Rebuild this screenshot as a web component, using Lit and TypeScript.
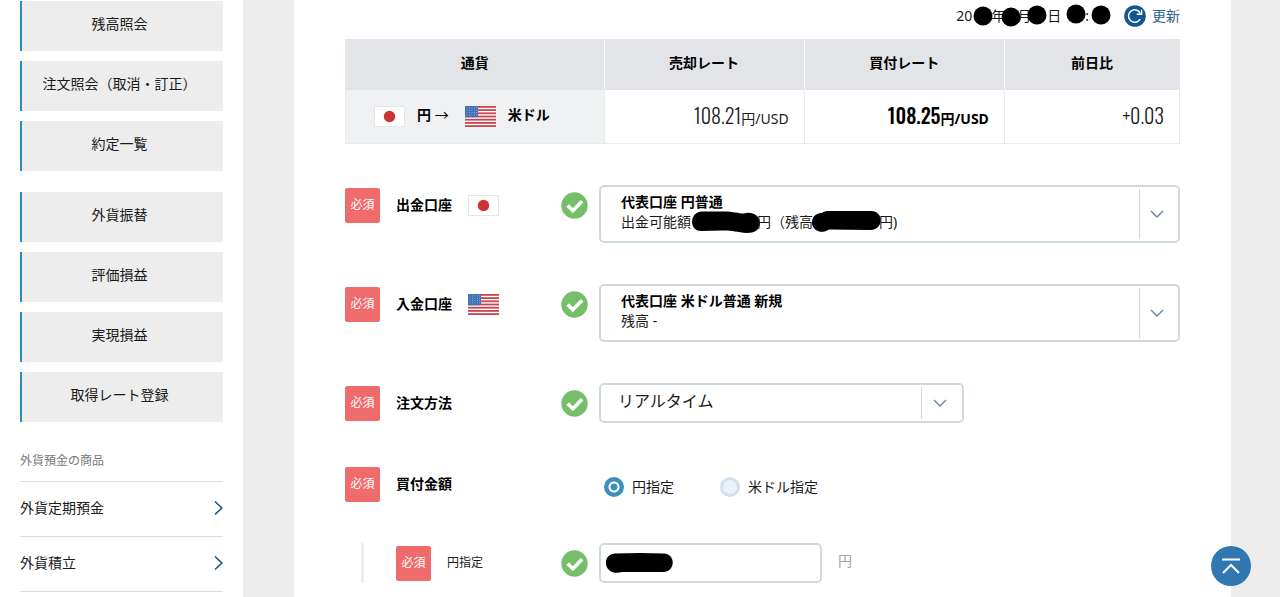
import { LitElement, html, svg, css, nothing } from "lit";
import { customElement, state } from "lit/decorators.js";

type Currency = "jpy" | "usd";

const TRADE_LINKS = [
  ["残高照会", "注文照会（取消・訂正）", "約定一覧"],
  ["外貨振替", "評価損益", "実現損益", "取得レート登録"],
];
const PRODUCT_LINKS = ["外貨定期預金", "外貨積立"];

const flag = (currency: Currency) =>
  currency === "jpy"
    ? html`<svg class="flag" viewBox="0 0 31 21" role="img" aria-label="日本">
        <rect x="0.5" y="0.5" width="30" height="20" fill="#fff" stroke="#e4e6e9" />
        <circle cx="15.5" cy="10.5" r="5.7" fill="#cc3333" />
      </svg>`
    : html`<svg class="flag" viewBox="0 0 31 21" role="img" aria-label="アメリカ">
        <rect width="31" height="21" fill="#fff" />
        ${[0, 1, 2, 3, 4, 5, 6].map(
          (i) => svg`<rect y=${i * 3.2} width="31" height="1.8" fill="#c9454b" />`
        )}
        <rect width="13" height="11.2" fill="#3f6fb8" />
        ${[1.5, 3.8, 6.1, 8.4].map((y) =>
          [1.5, 4, 6.5, 9, 11.2].map(
            (x) => svg`<rect x=${x} y=${y} width="0.9" height="0.9" fill="#a9c0e2" />`
          )
        )}
      </svg>`;

/** Black dot hiding part of the timestamp. */
const dot = (width: number, cx: number, cy: number) =>
  html`<svg class="mask" width=${width} height="20" aria-hidden="true">
    <circle cx=${cx} cy=${cy} r="9.5" />
  </svg>`;

const maskAvailable = html`<svg class="mask" width="66" height="20" aria-hidden="true">
  <path d="M11 -0.5 H32 C43 -0.5 47 1.5 53 1.5 C60 -1 69 3 69 11 C69 18 63 21 56 21 C45 20 40 18 31 18.5 L10 19 C-2 19 -2 0 11 -0.5Z" />
</svg>`;
const maskBalance = html`<svg class="mask" width="66" height="20" aria-hidden="true">
  <path d="M14 -1 H58 C71 -1 71 17.5 58 18 L16 17.5 C8 23 -1 18 -1 10.500 C-1 3 5 1 9 1 C10 0 12 -1 14 -1Z" />
</svg>`;

const check = html`<svg class="check" viewBox="0 0 27 27" role="img" aria-label="入力済み">
  <circle cx="13.5" cy="13.5" r="13.2" fill="#76bf69" />
  <path d="M6.700 13.600 L11.800 18.800 L21.200 9.300" fill="none" stroke="#fff" stroke-width="3.600" />
</svg>`;

const arrowDown = html`<span class="arrow" aria-hidden="true">
  <svg width="14" height="8" viewBox="0 0 14 8">
    <path d="M1 1 L7 7 L13 1" fill="none" stroke="#6685a3" stroke-width="1.400" />
  </svg>
</span>`;

@customElement("app-root")
export class AppRoot extends LitElement {
  static styles = css`
    :host {
      display: block;
      min-height: 100vh;
      background: #ededed;
      color: #1a1a1a;
      font: 14px/20px "Noto Sans", "Noto Sans CJK JP", sans-serif;
    }
    * {
      box-sizing: border-box;
    }
    a {
      color: inherit;
      text-decoration: none;
    }
    ul {
      list-style: none;
      margin: 0;
      padding: 0;
    }
    .page {
      display: grid;
      grid-template-columns: 243px minmax(0, 1fr);
      column-gap: 51px;
      height: 100vh;
      overflow: hidden;
      padding-right: 49px;
    }
    .side {
      background: #fff;
      padding: 1px 20px 0;
    }
    .group {
      display: grid;
      gap: 10px;
      margin-bottom: 21px;
    }
    .tile {
      display: flex;
      align-items: center;
      justify-content: center;
      height: 50px;
      padding: 0 6px 4px 0;
      background: #ededed;
      border-left: 2px solid #2f8cb8;
    }
    .side-title {
      margin: 0;
      padding: 8px 0 10px;
      border-bottom: 1px solid #dcdcdc;
      font-size: 12px;
      font-weight: 400;
      color: #777;
    }
    .product {
      display: flex;
      align-items: center;
      justify-content: space-between;
      height: 55px;
      padding-bottom: 3px;
      border-bottom: 1px solid #dcdcdc;
    }
    .main {
      background: #fff;
      padding: 0 51px;
    }
    .status {
      display: flex;
      align-items: center;
      justify-content: flex-end;
      gap: 14px;
      height: 32px;
      margin-bottom: 7px;
    }
    .time {
      white-space: nowrap;
    }
    .mask {
      overflow: visible;
      vertical-align: top;
      fill: #000;
    }
    .refresh {
      display: flex;
      align-items: center;
      gap: 6px;
      padding: 0;
      border: 0;
      background: none;
      font: inherit;
      color: #2d6590;
      cursor: pointer;
    }
    .rates {
      width: 100%;
      table-layout: fixed;
      border-collapse: collapse;
    }
    .rates th,
    .rates td {
      padding: 0 15px;
      border: 1px solid #e9eaec;
    }
    .rates th {
      color: #000;
      font-weight: 700;
    }
    .rates thead th {
      height: 50px;
      padding-bottom: 4px;
      background: #e3e4e8;
      border-color: #e3e4e8;
      border-right-color: #f8f8f9;
    }
    .rates thead th:last-child {
      border-right-color: #e3e4e8;
    }
    .rates tbody th {
      height: 54px;
      padding: 0 28px;
      background: #f0f1f3;
    }
    .rates td {
      text-align: right;
      white-space: nowrap;
    }
    .col-pair {
      width: 31%;
    }
    .col-rate {
      width: 24%;
    }
    .pair {
      display: flex;
      align-items: center;
    }
    .pair-text {
      padding: 0 16px 4px 12px;
    }
    .pair-arrow {
      font-family: "Noto Sans CJK JP", sans-serif;
      font-weight: 400;
    }
    .strong {
      color: #000;
      font-weight: 700;
    }
    .figure {
      font-family: "Oswald", "Roboto Condensed", "Liberation Sans Narrow", "Liberation Sans", sans-serif;
      font-size: 20px;
      font-weight: 300;
    }
    .strong .figure {
      font-weight: 500;
    }
    .flag {
      display: block;
      width: 31px;
      height: 21px;
      flex: none;
    }
    .form {
      display: grid;
      gap: 41px;
      margin-top: 41px;
    }
    .amount {
      display: grid;
      gap: 39px;
      margin: 0;
      padding: 0;
      border: 0;
      min-width: 0;
    }
    .row {
      display: grid;
      grid-template-columns: 243px minmax(0, 1fr);
      column-gap: 11px;
    }
    .caption {
      display: flex;
      align-items: center;
      gap: 16px;
      height: 40px;
    }
    .caption-sub {
      margin-left: 16px;
      padding-left: 32px;
      border-left: 3px solid #ececec;
      font-size: 12px;
    }
    .badge {
      flex: none;
      width: 35px;
      height: 35px;
      border-radius: 2px;
      background: #f06c6c;
      color: #fff;
      font-size: 12px;
      line-height: 33px;
      text-align: center;
    }
    .check {
      width: 27px;
      height: 27px;
      margin-left: auto;
      flex: none;
    }
    .field {
      display: grid;
      color: #1a1a1a;
    }
    .field > * {
      grid-area: 1 / 1;
    }
    .field-narrow {
      width: 365px;
      max-width: 100%;
    }
    .select,
    .text {
      margin: 0;
      border: 2px solid #cfdae0;
      border-radius: 5px;
      background: #fff;
      color: #1a1a1a;
      font: inherit;
    }
    .select {
      appearance: none;
      width: 100%;
      height: 40px;
      padding: 0 44px 4px 17px;
      font-size: 16px;
    }
    .select-account {
      height: 58px;
      padding: 0 42px 24px 20px;
      color: #000;
      font-size: 14px;
      font-weight: 700;
    }
    .note {
      align-self: end;
      padding: 0 42px 11px 22px;
      pointer-events: none;
      white-space: nowrap;
    }
    .arrow {
      display: grid;
      place-items: center;
      justify-self: end;
      width: 39px;
      margin: 4px 2px;
      padding-right: 4px;
      border-left: 1px solid #cfdae0;
      pointer-events: none;
    }
    .field-narrow .arrow {
      width: 41px;
    }
    .options {
      display: flex;
      align-items: center;
      gap: 46px;
      padding: 5px 0 0 5px;
    }
    .option {
      display: flex;
      align-items: center;
      gap: 8px;
    }
    .radio {
      appearance: none;
      width: 20px;
      height: 20px;
      margin: 0;
      border: 3px solid #d3e0ec;
      border-radius: 50%;
      background: #e9f2fd;
    }
    .radio:checked {
      border-color: #3b8fbe;
      background: radial-gradient(circle, #3b8fbe 3px, #fff 4px, #fff 5px, #3b8fbe 6px);
    }
    .entry {
      display: flex;
      align-items: center;
      gap: 16px;
      color: #9aa5ad;
    }
    .entry-unit {
      padding-bottom: 4px;
    }
    .amount-box {
      display: grid;
      align-items: center;
      width: 223px;
    }
    .amount-box > * {
      grid-area: 1 / 1;
    }
    .text {
      width: 100%;
      height: 40px;
      padding: 0 8px;
    }
    .amount-mask {
      margin-left: 7px;
      pointer-events: none;
    }
    .to-top {
      position: fixed;
      right: 29px;
      bottom: 11px;
      width: 40px;
      height: 40px;
      border-radius: 50%;
      background: rgba(38, 112, 174, 0.95);
    }
    .to-top svg {
      display: block;
    }
  `;

  @state() private unit: Currency = "jpy";

  private caption(id: string, label: string, currency?: Currency) {
    return html`<div class="caption">
      <span class="badge">必須</span>
      <label class="strong" for=${id}>${label}</label>
      ${currency ? flag(currency) : nothing} ${check}
    </div>`;
  }

  private option(value: Currency, label: string) {
    return html`<label class="option">
      <input
        class="radio"
        type="radio"
        name="unit"
        value=${value}
        .checked=${this.unit === value}
        @change=${() => (this.unit = value)}
      />${label}
    </label>`;
  }

  render() {
    return html`<div class="page">
      <nav class="side">
        ${TRADE_LINKS.map(
          (group) => html`<ul class="group">
            ${group.map((t) => html`<li><a class="tile" href="#">${t}</a></li>`)}
          </ul>`
        )}
        <h2 class="side-title">外貨預金の商品</h2>
        <ul>
          ${PRODUCT_LINKS.map(
            (t) => html`<li>
              <a class="product" href="#"
                >${t}<svg width="9" height="16" viewBox="0 0 9 16" aria-hidden="true">
                  <path d="M1 1.500 L7.800 8 L1 14.500" fill="none" stroke="#1f5a90" stroke-width="1.700" /></svg
              ></a>
            </li>`
          )}
        </ul>
      </nav>

      <main class="main">
        <div class="status">
          <span class="time"
            >20${dot(19, 11, 10)}年${dot(12, 6, 11)}月${dot(16, 6, 9)}日${dot(24, 15, 8)}:${dot(21, 12, 9)}</span
          >
          <button class="refresh" type="button">
            <svg width="22" height="22" viewBox="0 0 22 22" aria-hidden="true">
              <circle cx="11" cy="11" r="10.800" fill="#14568f" />
              <path d="M16.200 14 A6.200 6.200 0 1 1 16.300 8.300" fill="none" stroke="#fff" stroke-width="1.500" />
              <path d="M17.600 4.800 V9.200 H12.800" fill="none" stroke="#fff" stroke-width="1.400" />
            </svg>
            更新
          </button>
        </div>

        <table class="rates">
          <colgroup>
            <col class="col-pair" />
            <col class="col-rate" />
            <col class="col-rate" />
            <col />
          </colgroup>
          <thead>
            <tr>
              <th scope="col">通貨</th>
              <th scope="col">売却レート</th>
              <th scope="col">買付レート</th>
              <th scope="col">前日比</th>
            </tr>
          </thead>
          <tbody>
            <tr>
              <th scope="row">
                <div class="pair">
                  ${flag("jpy")}<span class="pair-text">円 <span class="pair-arrow">→</span></span>${flag("usd")}<span
                    class="pair-text"
                    >米ドル</span
                  >
                </div>
              </th>
              <td><span class="figure">108.21</span>円/USD</td>
              <td class="strong"><span class="figure">108.25</span>円/USD</td>
              <td><span class="figure">+0.03</span></td>
            </tr>
          </tbody>
        </table>

        <form class="form" @submit=${(e: Event) => e.preventDefault()}>
          <div class="row">
            ${this.caption("from", "出金口座", "jpy")}
            <div class="field">
              <select class="select select-account" id="from">
                <option>代表口座 円普通</option>
              </select>
              <span class="note">出金可能額${maskAvailable}円（残高${maskBalance}円)</span>
              ${arrowDown}
            </div>
          </div>
          <div class="row">
            ${this.caption("to", "入金口座", "usd")}
            <div class="field">
              <select class="select select-account" id="to">
                <option>代表口座 米ドル普通 新規</option>
              </select>
              <span class="note">残高 -</span>
              ${arrowDown}
            </div>
          </div>
          <div class="row">
            ${this.caption("method", "注文方法")}
            <div class="field field-narrow">
              <select class="select" id="method">
                <option>リアルタイム</option>
              </select>
              ${arrowDown}
            </div>
          </div>
          <fieldset class="amount" aria-labelledby="amount-title">
            <div class="row">
              <div class="caption">
                <span class="badge">必須</span>
                <span class="strong" id="amount-title">買付金額</span>
              </div>
              <div class="options">${this.option("jpy", "円指定")} ${this.option("usd", "米ドル指定")}</div>
            </div>
            <div class="row">
              <div class="caption caption-sub">
                <span class="badge">必須</span>
                <label for="yen">円指定</label>
                ${check}
              </div>
              <div class="entry">
                <div class="amount-box">
                  <input class="text" id="yen" type="text" inputmode="numeric" />
                  <svg class="amount-mask" width="67" height="20" aria-hidden="true">
                    <path d="M9 0.500 L34 0 L57 0.500 C70 0 70 19 57 19 H16 C12 20.500 6 20 3 17 C-3 11 0 1 9 0.500Z" />
                  </svg>
                </div>
                <span class="entry-unit">円</span>
              </div>
            </div>
          </fieldset>
        </form>
      </main>

      <a class="to-top" href="#" aria-label="ページの先頭へ">
        <svg width="40" height="40" viewBox="0 0 40 40" aria-hidden="true">
          <path d="M11 13.500 H29 M12 27 L20 19 L28 27" fill="none" stroke="#fff" stroke-width="2" />
        </svg>
      </a>
    </div>`;
  }
}
